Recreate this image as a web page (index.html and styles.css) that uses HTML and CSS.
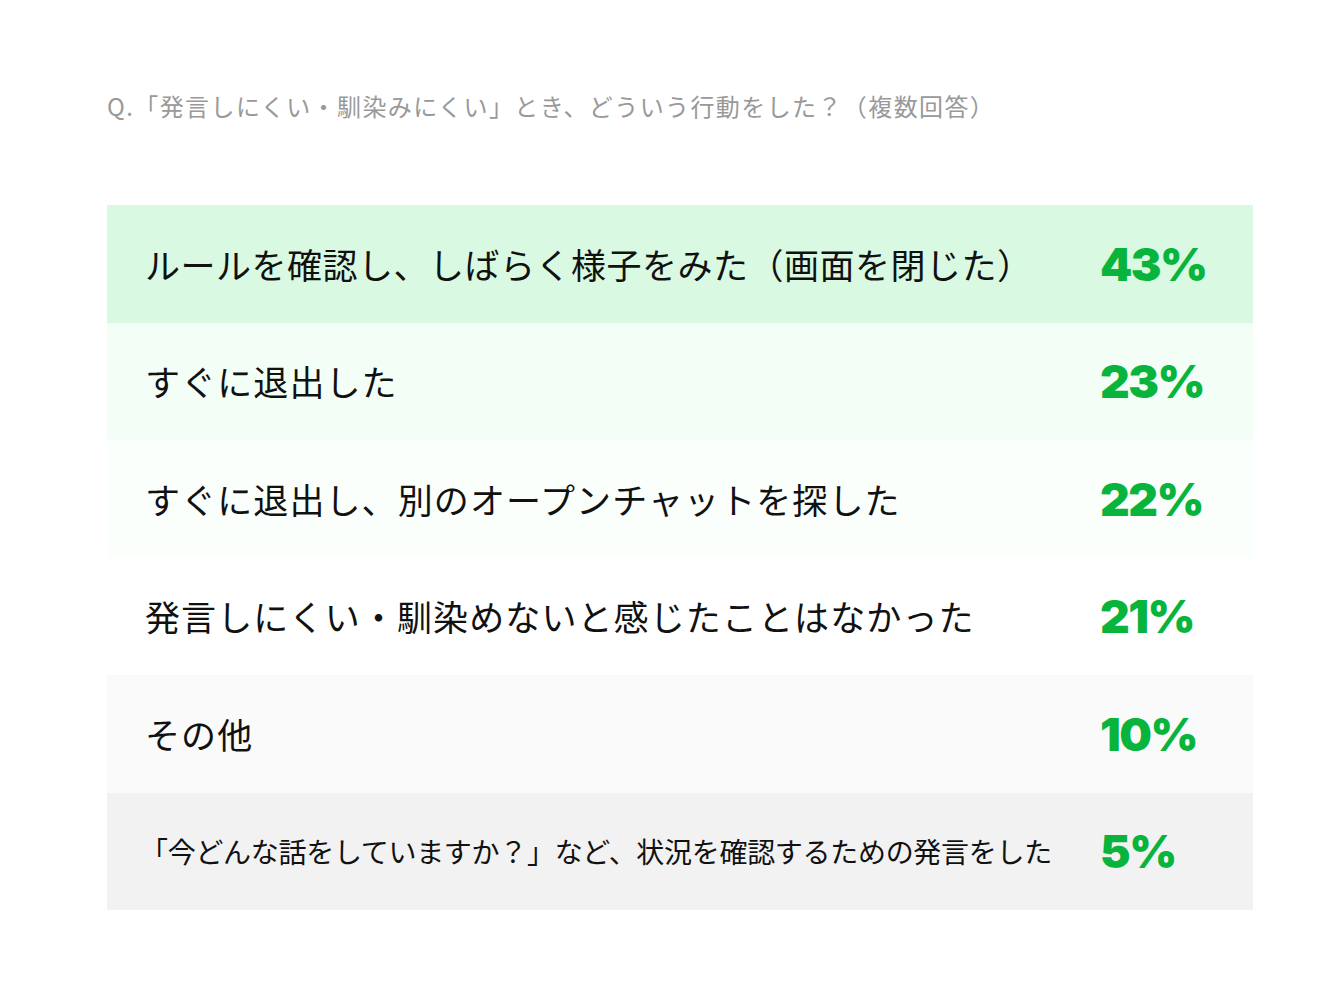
FILE: index.html
```html
<!DOCTYPE html>
<html lang="ja">
<head>
<meta charset="utf-8">
<link rel="stylesheet" href="styles.css">
</head>
<body>
<main class="page">
  <p class="question">Q.「発言しにくい・馴染みにくい」とき、どういう行動をした？（複数回答）</p>
  <div class="table">
    <div class="row r1"><span class="label">ルールを確認し、しばらく様子をみた（画面を閉じた）</span><span class="pct">43%</span></div>
    <div class="row r2"><span class="label">すぐに退出した</span><span class="pct">23%</span></div>
    <div class="row r3"><span class="label">すぐに退出し、別のオープンチャットを探した</span><span class="pct">22%</span></div>
    <div class="row r4"><span class="label">発言しにくい・馴染めないと感じたことはなかった</span><span class="pct">21%</span></div>
    <div class="row r5"><span class="label">その他</span><span class="pct">10%</span></div>
    <div class="row r6"><span class="label small">「今どんな話をしていますか？」など、状況を確認するための発言をした</span><span class="pct">5%</span></div>
  </div>
</main>
</body>
</html>
```

FILE: styles.css
```css
html, body {
  margin: 0;
  padding: 0;
  background: #ffffff;
}
body {
  font-family: "Noto Sans CJK JP", "Noto Sans", sans-serif;
  color: #111;
}
.page {
  padding: 91px 67px 0 107px;
}
.question {
  margin: 0;
  font-size: 24px;
  line-height: 30px;
  letter-spacing: 1.4px;
  color: #999999;
}
.table {
  margin-top: 84px;
  width: 1146px;
  display: flex;
  flex-direction: column;
}
.row {
  height: 117.5px;
  display: grid;
  grid-template-columns: 1fr 151px;
  align-items: center;
}
.r1 { background: #d9f9e2; }
.r2 { background: #f3fff6; }
.r3 { background: #fafffc; }
.r4 { background: #ffffff; }
.r5 { background: #fafafa; }
.r6 { background: #f2f2f2; }
.label {
  padding-left: 38px;
  font-size: 35px;
  line-height: 40px;
  letter-spacing: 1.1px;
  color: #111;
  white-space: nowrap;
}
.r1 .label {
  letter-spacing: 0.5px;
}
.label.small {
  font-size: 28px;
  padding-left: 33px;
  letter-spacing: -0.3px;
}
.pct {
  margin-left: -2px;
  font-family: "Inter", "Liberation Sans", sans-serif;
  font-weight: 900;
  font-size: 46px;
  line-height: 50px;
  color: #08b43c;
  letter-spacing: -1.5px;
}
```
